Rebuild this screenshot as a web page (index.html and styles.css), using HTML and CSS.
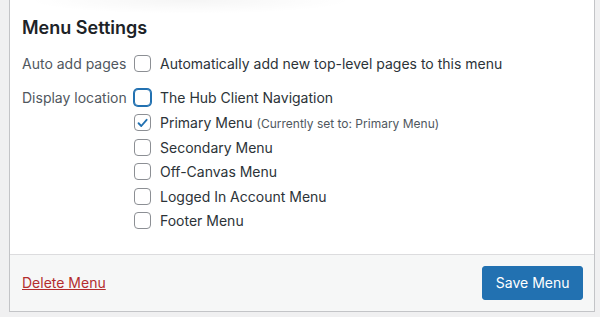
FILE: index.html
```html
<!DOCTYPE html>
<html lang="en">

<head>
    <meta charset="UTF-8">
    <meta name="viewport" content="width=device-width, initial-scale=1.0">
    <title>Menu Settings</title>
    <link rel="stylesheet" href="styles.css">
</head>

<body>

    <div class="menu-box">
        <!-- Settings body -->
        <div class="menu-body">
            <h3>Menu Settings</h3>

            <div class="settings-grid">
                <div class="setting-label">Auto add pages</div>
                <div class="option-list">
                    <label class="option">
                        <span class="check"></span>
                        <span>Automatically add new top-level pages to this menu</span>
                    </label>
                </div>

                <div class="setting-label">Display location</div>
                <div class="option-list">
                    <label class="option">
                        <span class="check focused"></span>
                        <span>The Hub Client Navigation</span>
                    </label>
                    <label class="option">
                        <span class="check">
                            <svg viewBox="0 0 16 16" width="16" height="16"><path d="M3.8 8.3 L6.7 11.2 L12.4 4.6" fill="none" stroke="#2271b1" stroke-width="2" stroke-linecap="round" stroke-linejoin="round"/></svg>
                        </span>
                        <span>Primary Menu <span class="note">(Currently set to: Primary Menu)</span></span>
                    </label>
                    <label class="option">
                        <span class="check"></span>
                        <span>Secondary Menu</span>
                    </label>
                    <label class="option">
                        <span class="check"></span>
                        <span>Off-Canvas Menu</span>
                    </label>
                    <label class="option">
                        <span class="check"></span>
                        <span>Logged In Account Menu</span>
                    </label>
                    <label class="option">
                        <span class="check"></span>
                        <span>Footer Menu</span>
                    </label>
                </div>
            </div>
        </div>

        <!-- Footer actions -->
        <div class="menu-footer">
            <a href="#" class="delete-link">Delete Menu</a>
            <button class="save-button">Save Menu</button>
        </div>
    </div>

</body>
</html>
```

FILE: styles.css
```css
body {
    background-color: #f0f0f1;
    font-family: 'Inter', 'Liberation Sans', sans-serif;
    margin: 0;
    padding: 0 5px 5px 9px;
    color: #3c434a;
    font-size: 14px;
}

/* Card */
.menu-box {
    background-color: white;
    border: 1px solid #c3c4c7;
    border-top: none;
    position: relative;
}

.menu-box::before {
    content: "";
    position: absolute;
    top: 0;
    left: 15px;
    width: 330px;
    height: 14px;
    background: radial-gradient(ellipse at top, rgba(0, 0, 0, 0.04), rgba(0, 0, 0, 0) 70%);
}

.menu-body {
    padding: 17px 12px 20.7px 12px;
}

.menu-body h3 {
    margin: 0 0 13.7px 0;
    font-size: 18px;
    line-height: 21px;
    font-weight: 600;
    color: #1d2327;
}

.settings-grid {
    display: grid;
    grid-template-columns: 112px 1fr;
    row-gap: 9.4px;
}

.setting-label {
    height: 24.6px;
    display: flex;
    align-items: center;
    color: #50575e;
}

.option-list {
    display: flex;
    flex-direction: column;
}

.option {
    height: 24.6px;
    display: flex;
    align-items: center;
    color: #2c3338;
    white-space: nowrap;
}

.check {
    width: 17px;
    height: 17px;
    box-sizing: border-box;
    border: 1px solid #8c8f94;
    border-radius: 4px;
    background: white;
    margin-right: 9px;
    display: flex;
    align-items: center;
    justify-content: center;
    flex-shrink: 0;
}

.check svg {
    display: block;
}

.check.focused {
    border-color: #2271b1;
    box-shadow: 0 0 0 1px #2271b1;
}

.note {
    font-size: 12px;
    color: #50575e;
}

/* Footer */
.menu-footer {
    background-color: #f6f7f7;
    border-top: 1px solid #dcdcde;
    padding: 11px 11px 11px 12px;
    display: flex;
    justify-content: space-between;
    align-items: center;
}

.delete-link {
    color: #b32d2e;
    text-decoration: underline;
}

.save-button {
    background-color: #2271b1;
    border: 1px solid #2271b1;
    border-radius: 3px;
    color: white;
    font-family: inherit;
    font-size: 14px;
    height: 34px;
    padding: 0 12.5px;
    cursor: pointer;
}
```
